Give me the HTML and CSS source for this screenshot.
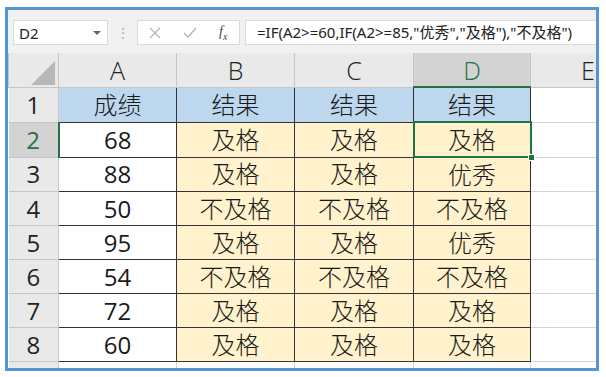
FILE: index.html
```html
<!DOCTYPE html>
<html lang="zh-CN">
<head>
  <meta charset="UTF-8">
  <title>成绩判断</title>
  <link rel="stylesheet" href="styles.css">
</head>
<body>
  <div class="frame">
    <div class="formula-bar">
      <div class="name-box">
        <span>D2</span>
        <svg class="caret" width="8" height="5" viewBox="0 0 8 5"><path d="M0 0h8L4 4z" fill="#666"/></svg>
      </div>
      <div class="grip">⋮</div>
      <div class="fx-box">
        <svg width="12" height="12" viewBox="0 0 12 12"><path d="M1 1l10 10M11 1L1 11" stroke="#b5b5b5" stroke-width="1.3"/></svg>
        <svg width="14" height="12" viewBox="0 0 14 12"><path d="M1 6l4 4 8-9" stroke="#b5b5b5" stroke-width="1.3" fill="none"/></svg>
        <span class="fx">f<sub>x</sub></span>
      </div>
      <div class="formula">=IF(A2&gt;=60,IF(A2&gt;=85,"优秀","及格"),"不及格")</div>
    </div>

    <table class="sheet">
      <colgroup>
        <col class="c-row">
        <col class="c-a">
        <col class="c-b">
        <col class="c-c">
        <col class="c-d">
        <col class="c-e">
      </colgroup>
      <tr class="col-heads">
        <th class="corner"><span class="tri"></span></th>
        <th>A</th>
        <th>B</th>
        <th>C</th>
        <th class="active">D</th>
        <th class="last">E</th>
      </tr>
      <tr>
        <th class="rh">1</th>
        <td class="t head">成绩</td>
        <td class="t head">结果</td>
        <td class="t head">结果</td>
        <td class="t head">结果</td>
        <td></td>
      </tr>
      <tr>
        <th class="rh active">2</th>
        <td class="t num">68</td>
        <td class="t res">及格</td>
        <td class="t res">及格</td>
        <td class="t res selected">及格<span class="handle"></span></td>
        <td></td>
      </tr>
      <tr>
        <th class="rh">3</th>
        <td class="t num">88</td>
        <td class="t res">及格</td>
        <td class="t res">及格</td>
        <td class="t res">优秀</td>
        <td></td>
      </tr>
      <tr>
        <th class="rh">4</th>
        <td class="t num">50</td>
        <td class="t res">不及格</td>
        <td class="t res">不及格</td>
        <td class="t res">不及格</td>
        <td></td>
      </tr>
      <tr>
        <th class="rh">5</th>
        <td class="t num">95</td>
        <td class="t res">及格</td>
        <td class="t res">及格</td>
        <td class="t res">优秀</td>
        <td></td>
      </tr>
      <tr>
        <th class="rh">6</th>
        <td class="t num">54</td>
        <td class="t res">不及格</td>
        <td class="t res">不及格</td>
        <td class="t res">不及格</td>
        <td></td>
      </tr>
      <tr>
        <th class="rh">7</th>
        <td class="t num">72</td>
        <td class="t res">及格</td>
        <td class="t res">及格</td>
        <td class="t res">及格</td>
        <td></td>
      </tr>
      <tr>
        <th class="rh">8</th>
        <td class="t num">60</td>
        <td class="t res">及格</td>
        <td class="t res">及格</td>
        <td class="t res">及格</td>
        <td></td>
      </tr>
      <tr class="row-cut">
        <th class="rh"></th>
        <td></td>
        <td></td>
        <td></td>
        <td></td>
        <td></td>
      </tr>
    </table>
  </div>
</body>
</html>
```

FILE: styles.css
```css
body {
  margin: 7px 0 0 5px;
  background: #fff;
  font-family: "Noto Sans", "Noto Sans CJK SC", sans-serif;
}
.frame {
  width: 594px;
  height: 364px;
  box-sizing: border-box;
  border: 3px solid #5596d2;
  background: #f1f1f1;
  overflow: hidden;
}
.formula-bar {
  height: 43px;
  box-sizing: border-box;
  padding: 10px 0 0 5px;
  display: flex;
  align-items: flex-start;
}
.name-box {
  width: 95px;
  height: 25px;
  box-sizing: border-box;
  background: #fff;
  border: 1px solid #dadada;
  display: flex;
  align-items: center;
  justify-content: space-between;
  padding: 0 6px 0 5px;
  font-size: 15px;
  color: #222;
}
.caret {
  margin-top: 1px;
}
.grip {
  width: 29px;
  text-align: center;
  color: #b0b0b0;
  font-size: 14px;
  line-height: 25px;
}
.fx-box {
  width: 103px;
  height: 25px;
  box-sizing: border-box;
  background: #fff;
  border: 1px solid #dadada;
  display: flex;
  align-items: center;
  gap: 22px;
  padding-left: 11px;
}
.fx {
  font-family: "Liberation Serif", serif;
  font-style: italic;
  font-size: 14px;
  color: #444;
}
.fx sub {
  font-size: 10px;
}
.formula {
  flex: 1;
  height: 25px;
  margin-left: 5px;
  box-sizing: border-box;
  background: #fff;
  border: 1px solid #dadada;
  border-right: none;
  padding-left: 11px;
  font-size: 15px;
  line-height: 23px;
  color: #222;
  white-space: nowrap;
}
.sheet {
  border-collapse: collapse;
  table-layout: fixed;
  width: 640px;
  background: #fff;
}
.c-row { width: 50px; }
.c-a { width: 118px; }
.c-b { width: 118px; }
.c-c { width: 119px; }
.c-d { width: 117px; }
.c-e { width: 118px; }
.sheet tr {
  height: 34px;
}
.sheet th,
.sheet td {
  height: 33px;
  padding: 0;
  border: 1px solid #d4d4d4;
  text-align: center;
  vertical-align: middle;
  line-height: 28px;
  color: #1a1a1a;
  white-space: nowrap;
  overflow: hidden;
}
.col-heads th {
  background: #e9e9e9;
  border-color: #c6c6c6;
  border-top: none;
  font-family: "Open Sans", sans-serif;
  font-weight: 300;
  font-size: 25px;
  color: #222;
}
.col-heads th.last {
  text-align: left;
  padding-left: 50px;
}
.corner {
  position: relative;
}
.tri {
  position: absolute;
  right: 3px;
  bottom: 2px;
  width: 0;
  height: 0;
  border-left: 24px solid transparent;
  border-bottom: 24px solid #b8b8b8;
}
.rh {
  background: #e9e9e9;
  border-color: #c6c6c6 !important;
  border-left: none !important;
  font-family: "Open Sans", sans-serif;
  font-weight: 400;
  font-size: 24px;
  color: #222 !important;
}
th.active {
  background: #d3d3d3;
  color: #217346 !important;
}
.col-heads th.active {
  border-bottom: 2px solid #217346;
}
.rh.active {
  border-right: 2px solid #217346 !important;
}
.sheet td.t {
  border: 1px solid #333;
}
.head {
  background: #bdd7ee;
  font-size: 24px;
  font-weight: 300;
}
.num {
  font-family: "Open Sans", sans-serif;
  font-size: 24px;
}
.res {
  background: #fff2cc;
  font-size: 24px;
  font-weight: 300;
}
.sheet td.selected {
  position: relative;
  overflow: visible;
  border: 2px solid #217346;
}
.handle {
  position: absolute;
  right: -5px;
  bottom: -5px;
  width: 5px;
  height: 5px;
  background: #217346;
  border: 1px solid #fff;
}
.row-cut td,
.row-cut th {
  border-bottom: none;
}
```
